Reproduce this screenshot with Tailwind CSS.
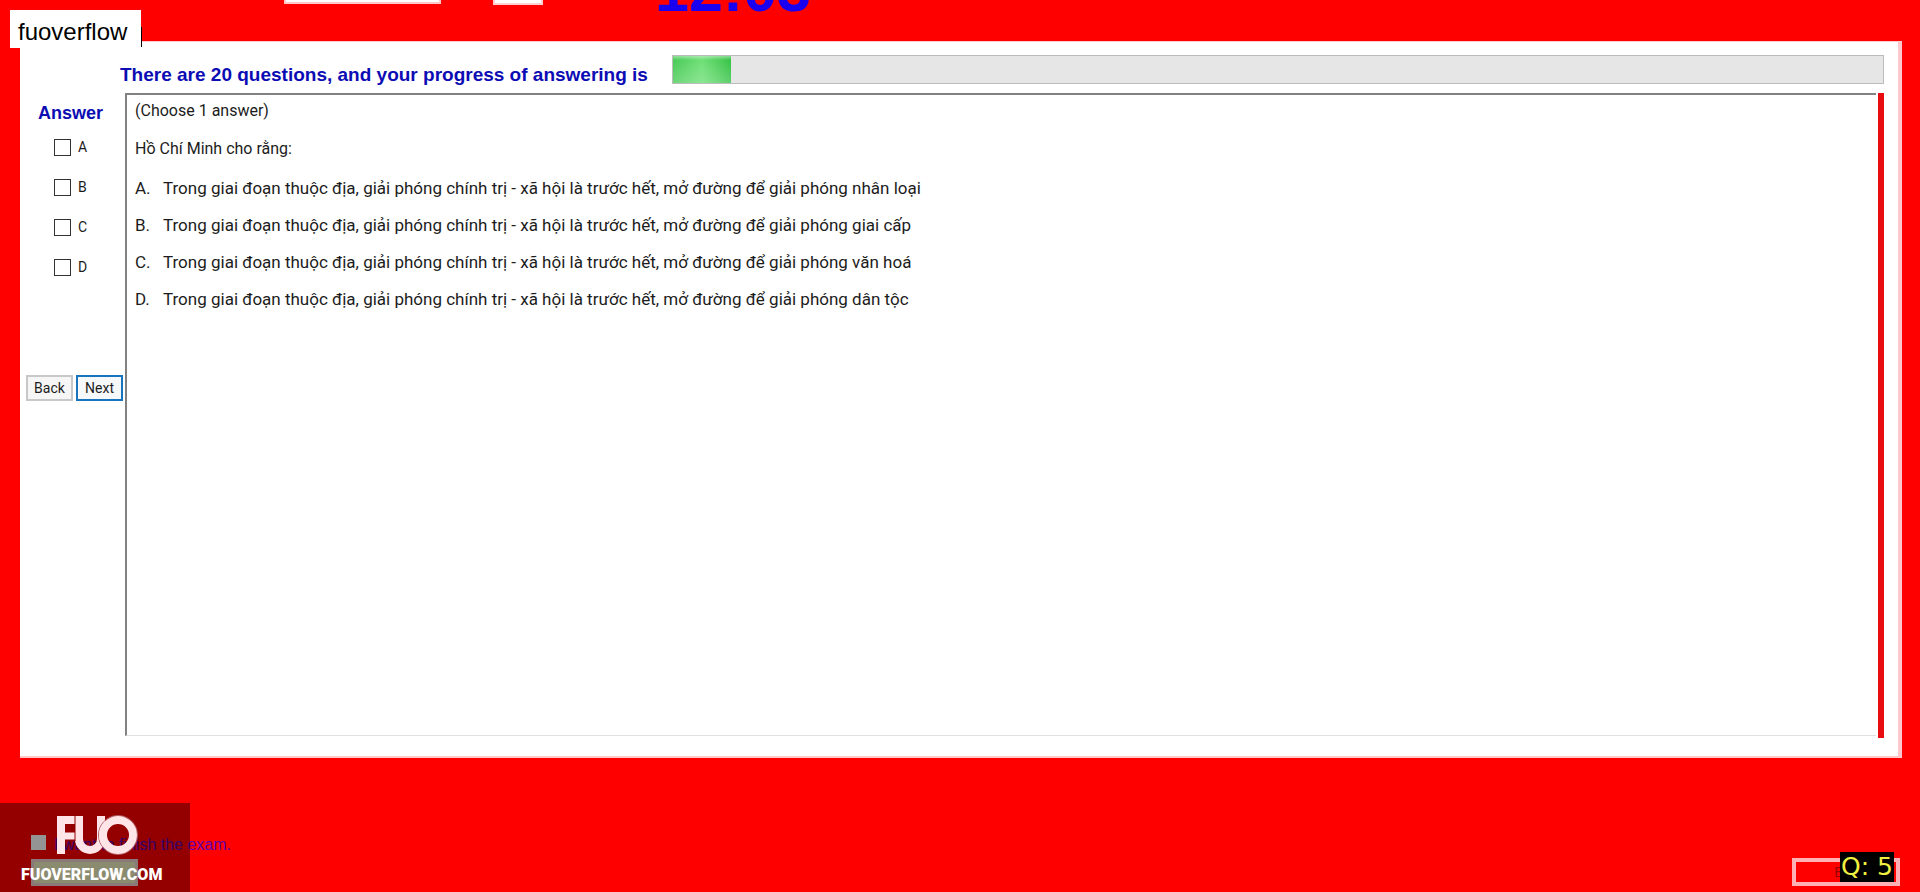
<!DOCTYPE html>
<html lang="vi">
<head>
<meta charset="utf-8">
<title>Exam</title>
<script src="https://cdn.jsdelivr.net/npm/@tailwindcss/browser@4"></script>
</head>
<body class="bg-[#ff0000] font-['Liberation_Sans',Arial,sans-serif] text-[#1c1c1c]">
<div class="relative flex h-screen min-h-[760px] flex-col overflow-hidden">

  <header class="flex h-[41px] shrink-0 items-start overflow-hidden pl-[284px]">
    <select aria-label="Font" class="-mt-6 h-7 w-[157px] border-2 border-[#ffc8c8] bg-white"><option></option></select>
    <input type="number" aria-label="Size" class="-mt-6 ml-[52px] h-[29px] w-[50px] border-2 border-[#ffd0d0] bg-white">
    <div class="-mt-10 ml-[112px] text-[61px] leading-[60px] font-bold text-[#1a00f0]">12:03</div>
  </header>

  <main class="mr-[18px] ml-5 flex h-[717px] shrink-0 flex-col border-t border-r-4 border-b-2 border-[#ffc8cc] bg-white">
    <div class="flex h-[51px] items-start pt-[13px] pr-[14px] pl-[100px]">
      <span id="progress-label" class="w-[552px] shrink-0 pt-2 text-[19px] leading-6 font-bold text-[#0c0cb4]">There are 20 questions, and your progress of answering is</span>
      <div role="progressbar" aria-labelledby="progress-label" aria-valuenow="1" aria-valuemax="20" class="h-[29px] flex-1 border border-[#bcbcbc] bg-[#e6e6e6]">
        <div class="h-full bg-linear-to-r from-[#4acb58] via-[#70e078] to-[#36c348]" style="width:4.8%">
          <div class="h-full bg-linear-to-b from-white/40 via-transparent via-15% to-white/20"></div>
        </div>
      </div>
    </div>

    <div class="flex flex-1 pr-[14px] pb-5">
      <aside class="flex w-[105px] shrink-0 flex-col">
        <h2 class="pt-2 pl-[18px] text-lg leading-6 font-bold text-[#0c0cb4]">Answer</h2>
        <div class="flex flex-col gap-5 pt-3 pl-[34px] font-[Roboto,sans-serif] text-sm leading-5">
          <label class="flex items-center gap-[7px]"><input type="checkbox" class="size-[17px] appearance-none border border-[#333] bg-white">A</label>
          <label class="flex items-center gap-[7px]"><input type="checkbox" class="size-[17px] appearance-none border border-[#333] bg-white">B</label>
          <label class="flex items-center gap-[7px]"><input type="checkbox" class="size-[17px] appearance-none border border-[#333] bg-white">C</label>
          <label class="flex items-center gap-[7px]"><input type="checkbox" class="size-[17px] appearance-none border border-[#333] bg-white">D</label>
        </div>
        <div class="flex gap-[3px] pt-[98px] pl-[6px] font-[Roboto,sans-serif] text-sm">
          <button class="h-[26px] w-[47px] border-2 border-[#c8c8c8] bg-[#f6f6f6]">Back</button>
          <button class="h-[26px] w-[47px] border-2 border-[#1874bc] bg-[#f6f8fa]">Next</button>
        </div>
      </aside>
      <section class="mr-[2px] flex-1 border-t-2 border-b border-l-2 border-t-[#828282] border-b-[#e0e0e0] border-l-[#828282] pt-1 pl-2 font-[Roboto,sans-serif] text-base leading-6">
        <p>(Choose 1 answer)</p>
        <p class="pt-[14px]">Hồ Chí Minh cho rằng:</p>
        <ul class="flex flex-col gap-[13px] pt-[15px] text-[17px]">
          <li class="flex"><span class="w-7">A.</span>Trong giai đoạn thuộc địa, giải phóng chính trị - xã hội là trước hết, mở đường để giải phóng nhân loại</li>
          <li class="flex"><span class="w-7">B.</span>Trong giai đoạn thuộc địa, giải phóng chính trị - xã hội là trước hết, mở đường để giải phóng giai cấp</li>
          <li class="flex"><span class="w-7">C.</span>Trong giai đoạn thuộc địa, giải phóng chính trị - xã hội là trước hết, mở đường để giải phóng văn hoá</li>
          <li class="flex"><span class="w-7">D.</span>Trong giai đoạn thuộc địa, giải phóng chính trị - xã hội là trước hết, mở đường để giải phóng dân tộc</li>
        </ul>
      </section>
      <div class="-mb-[2px] w-[6px] bg-[#e80c10]"></div>
    </div>
  </main>

  <footer class="flex flex-1 items-end justify-between pr-5 pb-[6px] pl-[31px]">
    <div class="flex flex-col">
      <label class="flex items-start gap-2 text-base leading-7 text-[#6000b0]"><input type="checkbox" class="mt-1 size-[15px] appearance-none bg-white">I want to finish the exam.</label>
      <button aria-label="Finish" class="h-[27px] w-[107px] border-[3px] border-[#f0d0d0] bg-[#f0f0c0]"></button>
    </div>
    <button class="h-7 w-[108px] border-4 border-[#ffb0b4] text-sm text-[#900]">Exit</button>
  </footer>

  <div class="absolute top-[10px] left-[10px] h-[38px] w-[131px] bg-white pl-2 text-2xl leading-[44px] text-black">fuoverflow</div>
  <div class="absolute top-[27px] left-[141px] h-5 w-px bg-black"></div>

  <!-- Site watermark -->
  <div class="absolute bottom-0 left-0 flex h-[89px] w-[190px] flex-col bg-black/42 pt-3 pl-[21px] text-white">
    <svg class="ml-[35px] h-10 w-[82px] shrink-0" viewBox="0 0 82 40" fill="none" role="img" aria-label="FUO">
      <path d="M5 39V5H19" stroke="#ffe4e8" stroke-width="8"/>
      <path d="M5 21H19" stroke="#ffe4e8" stroke-width="7"/>
      <path d="M23 1V24a11 11 0 0 0 22 0V1" stroke="#ffe4e8" stroke-width="8"/>
      <path d="M19 1V26" stroke="#940000" stroke-width="1"/>
      <circle cx="62" cy="20" r="19.500" fill="none" stroke="#b06068" stroke-width="1"/>
      <circle cx="62" cy="20" r="15" stroke="#ffe4e8" stroke-width="8"/>
    </svg>
    <div class="pt-2 font-[Roboto,sans-serif] text-base leading-6 font-black">FUOVERFLOW.COM</div>
  </div>

  <div class="absolute right-[26px] bottom-[10px] h-[30px] w-[54px] bg-black pl-px font-['DejaVu_Sans',sans-serif] text-[25px] leading-[30px] whitespace-pre text-[#f0f040]">Q: 5</div>
</div>
</body>
</html>
